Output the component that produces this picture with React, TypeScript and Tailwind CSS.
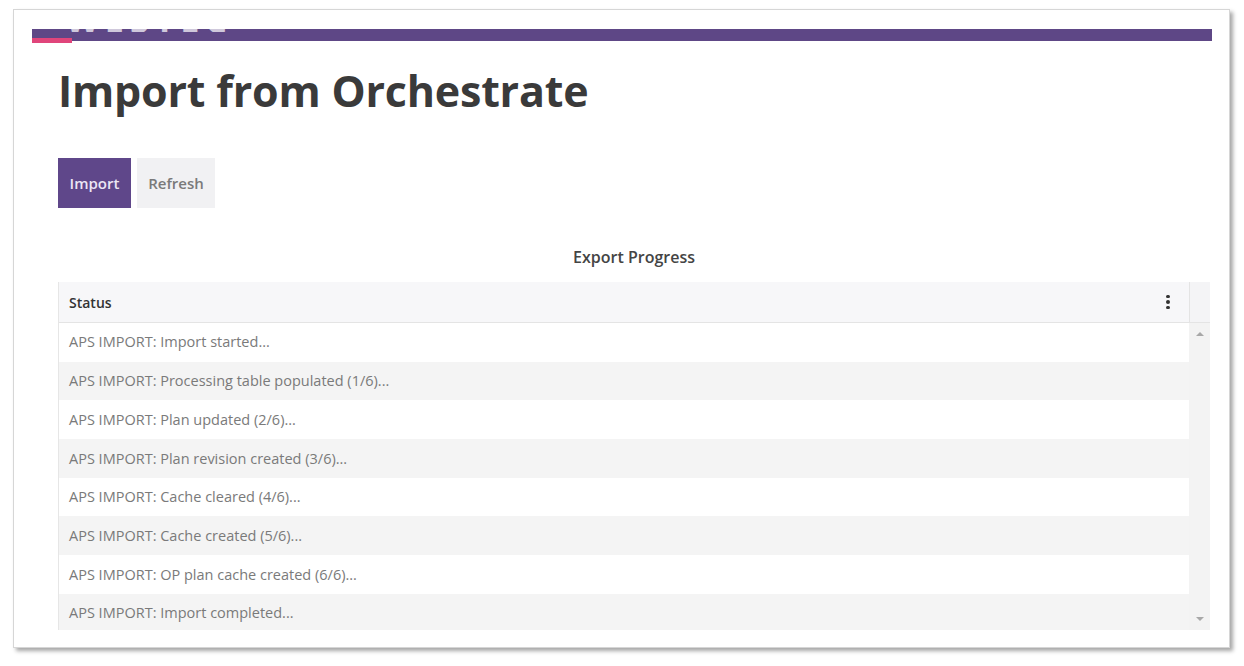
const rows = [
  "APS IMPORT: Import started...",
  "APS IMPORT: Processing table populated (1/6)...",
  "APS IMPORT: Plan updated (2/6)...",
  "APS IMPORT: Plan revision created (3/6)...",
  "APS IMPORT: Cache cleared (4/6)...",
  "APS IMPORT: Cache created (5/6)...",
  "APS IMPORT: OP plan cache created (6/6)...",
  "APS IMPORT: Import completed...",
];

function Kebab() {
  return (
    <div className="flex flex-col items-center gap-[2px] w-[4px]">
      <span className="block w-[3.5px] h-[3.5px] rounded-full bg-[#333]" />
      <span className="block w-[3.5px] h-[3.5px] rounded-full bg-[#333]" />
      <span className="block w-[3.5px] h-[3.5px] rounded-full bg-[#333]" />
    </div>
  );
}

export default function App() {
  return (
    <div
      className="w-[1244px] h-[666px] bg-white overflow-hidden pt-[9px] pl-[13px]"
      style={{ fontFamily: '"Open Sans", "Noto Sans", sans-serif' }}
    >
      <div className="w-[1217px] h-[639px] bg-white border border-[#d6d6d6] shadow-[3px_3px_4px_rgba(0,0,0,0.35)] overflow-hidden">
        {/* top brand bar */}
        <div className="ml-[18px] mt-[19px] w-[1180px] h-[12px] bg-[#5e4786] relative">
          <div className="absolute left-[34px] top-0 h-[3px] overflow-hidden">
            <div className="text-white font-bold text-[34px] leading-none tracking-[6px] -mt-[26px] opacity-70">
              WESTEC
            </div>
          </div>
          <div className="absolute left-0 top-[9px] w-[40px] h-[5px] bg-[#e0457b]" />
        </div>

        <div className="pl-[44px] pr-[6px]">
          <h1 className="mt-[27px] text-[43px] leading-[45px] font-bold text-[#3a3a3a] tracking-[-0.2px]">
            Import from Orchestrate
          </h1>

          <div className="mt-[45px] flex gap-[6px]">
            <button className="w-[73px] h-[50px] bg-[#5f478a] text-[#ece6f5] text-[15px] font-semibold">
              Import
            </button>
            <button className="w-[78px] h-[50px] bg-[#f1f1f3] text-[#7a7a7a] text-[15px] font-semibold">
              Refresh
            </button>
          </div>

          <div className="mt-[37px] w-[1152px] h-[24px] leading-[24px] text-center text-[16px] font-semibold text-[#444]">
            Export Progress
          </div>

          <div className="mt-[13px] w-[1152px] h-[348px] border-l border-[#e6e6e6] overflow-hidden">
            <div className="flex h-[41px] bg-[#f7f7f9] border-b border-[#e4e4e4]">
              <div className="flex-1 flex items-center justify-between pl-[10px] pr-[19px] text-[14px] font-semibold text-[#333]">
                <span>Status</span>
                <Kebab />
              </div>
              <div className="w-[21px] border-l border-[#e4e4e4] bg-[#f4f4f6]" />
            </div>
            <div className="flex">
              <div className="flex-1">
                {rows.map((r, i) => (
                  <div
                    key={i}
                    className={`h-[38.7px] flex items-center pl-[10px] text-[14.5px] text-[#7a7a7a] ${
                      i % 2 === 1 ? "bg-[#f4f4f4]" : "bg-white"
                    }`}
                  >
                    {r}
                  </div>
                ))}
              </div>
              <div className="w-[21px] h-[307px] bg-[#f3f3f3] flex flex-col items-center justify-between py-[9px]">
                <div className="w-0 h-0 border-l-[4px] border-r-[4px] border-b-[4px] border-l-transparent border-r-transparent border-b-[#a8a8a8]" />
                <div className="w-0 h-0 border-l-[4px] border-r-[4px] border-t-[4px] border-l-transparent border-r-transparent border-t-[#a8a8a8]" />
              </div>
            </div>
          </div>
        </div>
      </div>
    </div>
  );
}
